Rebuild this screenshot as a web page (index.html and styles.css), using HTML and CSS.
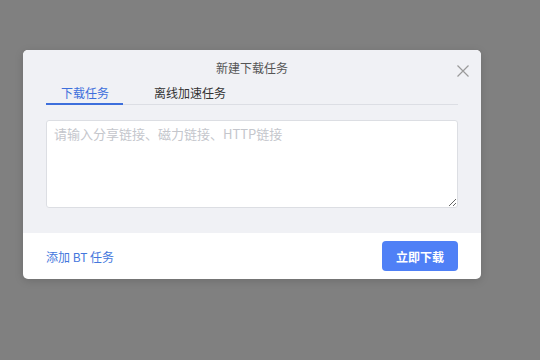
FILE: index.html
```html
<!DOCTYPE html>
<html lang="zh-CN">
<head>
<meta charset="utf-8">
<link rel="stylesheet" href="styles.css">
</head>
<body>
<div class="dialog">
  <div class="dialog-body">
    <div class="title">新建下载任务</div>
    <button class="close" aria-label="关闭">
      <svg width="12" height="12" viewBox="0 0 12 12"><path d="M0.5 0.5L11.5 11.5M11.5 0.5L0.5 11.5" stroke="#9a9a9a" stroke-width="1.2" fill="none"/></svg>
    </button>
    <div class="tabs">
      <div class="tab active">下载任务</div>
      <div class="tab">离线加速任务</div>
    </div>
    <textarea class="links" placeholder="请输入分享链接、磁力链接、HTTP链接"></textarea>
  </div>
  <div class="dialog-footer">
    <a class="bt-link">添加 BT 任务</a>
    <button class="primary">立即下载</button>
  </div>
</div>
</body>
</html>
```

FILE: styles.css
```css
html, body {
  margin: 0;
  padding: 0;
  width: 540px;
  height: 360px;
  background: #808080;
  overflow: hidden;
  font-family: "Noto Sans CJK SC", "Noto Sans", sans-serif;
}

.dialog {
  position: relative;
  margin: 50px 0 0 23px;
  width: 458px;
  height: 229px;
  border-radius: 5px;
  overflow: hidden;
  background: #ffffff;
  box-shadow: 0 2px 8px rgba(0, 0, 0, 0.15);
  display: flex;
  flex-direction: column;
}

.dialog-body {
  background: #f0f1f5;
  padding: 10px 23px 25px;
  display: flex;
  flex-direction: column;
}

.title {
  text-align: center;
  font-size: 12px;
  line-height: 16px;
  color: #555;
}

.close {
  position: absolute;
  top: 15px;
  right: 12px;
  width: 12px;
  height: 12px;
  padding: 0;
  border: 0;
  background: transparent;
  display: flex;
}

.tabs {
  margin-top: 6px;
  display: flex;
  gap: 16px;
  border-bottom: 1px solid #dcdee4;
}

.tab {
  padding: 0 14px 0 15px;
  font-size: 12px;
  line-height: 21px;
  color: #333;
  border-bottom: 2px solid transparent;
  margin-bottom: -1px;
}

.tab.active {
  color: #3d6fdc;
  border-bottom-color: #3d6fdc;
}

.links {
  margin-top: 15px;
  box-sizing: border-box;
  width: 412px;
  height: 88px;
  border: 1px solid #dcdee3;
  border-radius: 3px;
  background: #fff;
  padding: 5px 7px;
  font-family: "Noto Sans CJK SC", "Noto Sans", sans-serif;
  font-size: 13px;
  line-height: 16px;
  color: #333;
  resize: both;
  outline: none;
}

.links::placeholder {
  color: #c4c6cc;
}

.dialog-footer {
  flex: 1;
  display: flex;
  align-items: center;
  justify-content: space-between;
  padding: 0 23px;
}

.bt-link {
  font-size: 12px;
  color: #4477dd;
  cursor: pointer;
}

.primary {
  width: 76px;
  height: 30px;
  border: 0;
  border-radius: 4px;
  background: #4f80f6;
  color: #fff;
  font-family: "Noto Sans CJK SC", "Noto Sans", sans-serif;
  font-size: 12px;
  font-weight: bold;
  padding: 0;
}
```
